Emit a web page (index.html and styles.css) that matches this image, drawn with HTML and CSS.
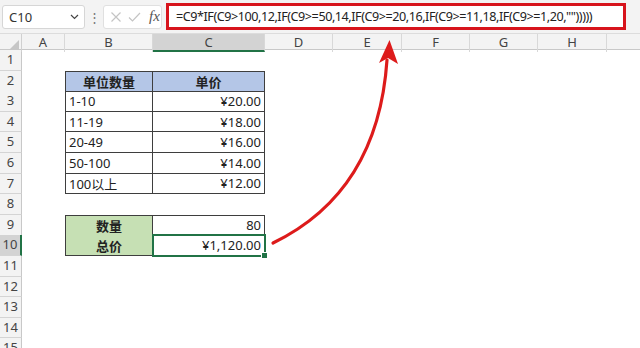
FILE: index.html
```html
<!DOCTYPE html>
<html>
<head>
<meta charset="utf-8">
<link rel="stylesheet" href="styles.css">
</head>
<body>
<div class="app">
  <div class="fbar">
    <div class="namebox"><span>C10</span><svg class="chev" width="9" height="6" viewBox="0 0 9 6"><path d="M1 1 L4.5 4.5 L8 1" fill="none" stroke="#444" stroke-width="1.2"/></svg></div>
    <div class="dots">⋮</div>
    <div class="fxbox">
      <svg width="12" height="12" viewBox="0 0 12 12"><path d="M1.5 1.5 L10.5 10.5 M10.5 1.5 L1.5 10.5" stroke="#c4c4c4" stroke-width="1.2"/></svg>
      <svg width="13" height="12" viewBox="0 0 13 12"><path d="M1 6.5 L4.5 10 L12 2" fill="none" stroke="#c4c4c4" stroke-width="1.2"/></svg>
      <span class="fx">fx</span>
    </div>
    <div class="formula">=C9*IF(C9&gt;100,12,IF(C9&gt;=50,14,IF(C9&gt;=20,16,IF(C9&gt;=11,18,IF(C9&gt;=1,20,""))))) </div>
    <div class="fill"></div>
  </div>
  <div class="sheet">
    <div class="row head">
      <div class="corner"></div>
      <div class="ch">A</div><div class="ch">B</div><div class="ch sel">C</div><div class="ch">D</div><div class="ch">E</div><div class="ch">F</div><div class="ch">G</div><div class="ch">H</div><div class="ch last"></div>
    </div>
    <div class="row"><div class="rh">1</div></div>
    <div class="row"><div class="rh">2</div><div></div><div class="c l top hb ctr bold">单位数量</div><div class="c top hb ctr bold">单价</div></div>
    <div class="row"><div class="rh">3</div><div></div><div class="c l">1-10</div><div class="c r">¥20.00</div></div>
    <div class="row"><div class="rh">4</div><div></div><div class="c l">11-19</div><div class="c r">¥18.00</div></div>
    <div class="row"><div class="rh">5</div><div></div><div class="c l">20-49</div><div class="c r">¥16.00</div></div>
    <div class="row"><div class="rh">6</div><div></div><div class="c l">50-100</div><div class="c r">¥14.00</div></div>
    <div class="row"><div class="rh">7</div><div></div><div class="c l">100以上</div><div class="c r">¥12.00</div></div>
    <div class="row"><div class="rh">8</div></div>
    <div class="row"><div class="rh">9</div><div></div><div class="c l top gb ctr bold">数量</div><div class="c top r">80</div></div>
    <div class="row"><div class="rh selr">10</div><div></div><div class="c l gb ctr bold">总价</div><div class="c r active">¥1,120.00</div></div>
    <div class="row"><div class="rh">11</div></div>
    <div class="row"><div class="rh">12</div></div>
    <div class="row"><div class="rh">13</div></div>
    <div class="row"><div class="rh">14</div></div>
    <div class="row"><div class="rh">15</div></div>
  </div>
  <svg class="arrow" width="640" height="348" viewBox="0 0 640 348">
    <path d="M273 243 Q378 192 387 60" fill="none" stroke="#dd1b1b" stroke-width="3.2" stroke-linecap="round"/>
    <path d="M389.5 40 L398 64 L388 58 L379 63 Z" fill="#dd1b1b"/>
  </svg>
</div>
</body>
</html>
```
FILE: styles.css
```css
* { box-sizing: border-box; }
html, body { margin: 0; padding: 0; background: #fff; }
body { font-family: "Noto Sans", "Noto Sans CJK SC", sans-serif; color: #222; }
.app { position: relative; width: 640px; height: 348px; overflow: hidden; }

.fbar { height: 34px; background: #f3f3f3; display: flex; align-items: center; padding: 0 0 0 2px; border-bottom: 1px solid #dcdcdc; }
.namebox { width: 83px; height: 24px; background: #fff; border: 1px solid #d6d6d6; border-radius: 3px; display: flex; align-items: center; justify-content: space-between; padding: 0 5px 0 6px; font-size: 13px; color: #333; }
.dots { width: 18px; text-align: center; color: #777; font-size: 13px; }
.fxbox { width: 59px; height: 24px; background: #fff; border: 1px solid #e0e0e0; border-radius: 3px; display: flex; align-items: center; gap: 6px; padding-left: 6px; }
.fx { font-family: "Liberation Serif", serif; font-style: italic; font-size: 15px; color: #555; margin-left: 2px; }
.formula { margin-left: 4px; width: 460px; height: 27px; background: #fff; border: 3px solid #d7141c; display: flex; align-items: center; padding-left: 7px; font-size: 12.6px; letter-spacing: -0.45px; color: #222; white-space: nowrap; overflow: hidden; }
.fill { flex: 1; }

.row { display: grid; grid-template-columns: 22px 43px 88px 112px 68px 69px 68px 68px 69px 33px; height: 20.6px; }
.row.head { height: 16px; background: #f3f3f3; border-bottom: 1px solid #c8c8c8; }
.corner { position: relative; border-right: 1px solid #d0d0d0; }
.corner::after { content: ""; position: absolute; right: 2px; bottom: 2px; width: 0; height: 0; border-left: 10px solid transparent; border-bottom: 10px solid #c6c6c6; }
.ch { font-size: 13px; color: #444; text-align: center; line-height: 16px; border-right: 1px solid #d8d8d8; }
.ch.sel { background: #d3d3d3; border-bottom: 2px solid #217346; }
.ch.last { border-right: none; }
.rh { background: #f3f3f3; border-bottom: 1px solid #d4d4d4; border-right: 1px solid #c8c8c8; font-size: 13px; color: #444; text-align: center; line-height: 19.6px; }
.rh.selr { background: #d3d3d3; border-right: 2px solid #217346; }

.c { font-size: 13px; color: #222; border-right: 1px solid #3e3e3e; border-bottom: 1px solid #3e3e3e; display: flex; align-items: center; padding: 0 3px; white-space: nowrap; position: relative; }
.c.l { border-left: 1px solid #3e3e3e; }
.c.top { border-top: 1px solid #3e3e3e; }
.c.r { justify-content: flex-end; }
.c.ctr { justify-content: center; }
.bold { font-weight: bold; }
.hb { background: #b4c6e7; }
.gb { background: #c6e0b4; }
.c.active::after { content: ""; position: absolute; left: -1px; top: -1px; right: -2px; bottom: -2px; border: 2px solid #217346; }
.c.active::before { content: ""; position: absolute; right: -4px; bottom: -4px; width: 5px; height: 5px; background: #217346; border: 1px solid #fff; z-index: 2; }

.arrow { position: absolute; left: 0; top: 0; pointer-events: none; }
```
